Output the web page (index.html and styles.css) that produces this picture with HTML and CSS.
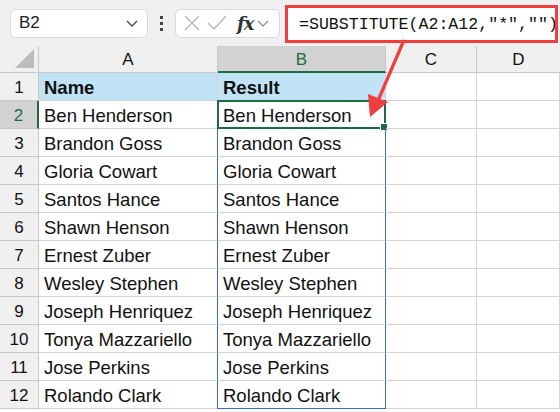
FILE: index.html
```html
<!DOCTYPE html>
<html>
<head>
<meta charset="utf-8">
<link rel="stylesheet" href="styles.css">
</head>
<body>
<div class="app">
  <div class="toolbar">
    <div class="namebox">
      <span class="ref">B2</span>
      <svg class="chev" width="14" height="10" viewBox="0 0 14 10"><path d="M2 3 L7 8 L12 3" fill="none" stroke="#444" stroke-width="1.3"/></svg>
    </div>
    <div class="dots"><i></i><i></i><i></i></div>
    <div class="fxbox">
      <svg width="20" height="20" viewBox="0 0 20 20"><path d="M3 3 L17 17 M17 3 L3 17" stroke="#b5b5b5" stroke-width="1.3"/></svg>
      <svg width="22" height="20" viewBox="0 0 22 20"><path d="M2 10 L8 16 L20 3" fill="none" stroke="#b5b5b5" stroke-width="1.3"/></svg>
      <span class="fx">fx</span>
      <svg width="12" height="10" viewBox="0 0 12 10"><path d="M1 3 L6 8 L11 3" fill="none" stroke="#888" stroke-width="1.1"/></svg>
    </div>
    <div class="formula">=SUBSTITUTE(A2:A12,"*","")</div>
  </div>

  <div class="sheet">
    <div class="corner"><span class="tri"></span></div>
    <div class="colh">A</div>
    <div class="colh sel">B</div>
    <div class="colh">C</div>
    <div class="colh last">D</div>

    <div class="rowh">1</div>
    <div class="cell head">Name</div>
    <div class="cell head">Result</div>
    <div class="cell"></div>
    <div class="cell"></div>

    <div class="rowh selr">2</div>
    <div class="cell">Ben Henderson</div>
    <div class="cell spill active">Ben Henderson<span class="handle"></span></div>
    <div class="cell"></div>
    <div class="cell"></div>

    <div class="rowh">3</div>
    <div class="cell">Brandon Goss</div>
    <div class="cell spill">Brandon Goss</div>
    <div class="cell"></div>
    <div class="cell"></div>

    <div class="rowh">4</div>
    <div class="cell">Gloria Cowart</div>
    <div class="cell spill">Gloria Cowart</div>
    <div class="cell"></div>
    <div class="cell"></div>

    <div class="rowh">5</div>
    <div class="cell">Santos Hance</div>
    <div class="cell spill">Santos Hance</div>
    <div class="cell"></div>
    <div class="cell"></div>

    <div class="rowh">6</div>
    <div class="cell">Shawn Henson</div>
    <div class="cell spill">Shawn Henson</div>
    <div class="cell"></div>
    <div class="cell"></div>

    <div class="rowh">7</div>
    <div class="cell">Ernest Zuber</div>
    <div class="cell spill">Ernest Zuber</div>
    <div class="cell"></div>
    <div class="cell"></div>

    <div class="rowh">8</div>
    <div class="cell">Wesley Stephen</div>
    <div class="cell spill">Wesley Stephen</div>
    <div class="cell"></div>
    <div class="cell"></div>

    <div class="rowh">9</div>
    <div class="cell">Joseph Henriquez</div>
    <div class="cell spill">Joseph Henriquez</div>
    <div class="cell"></div>
    <div class="cell"></div>

    <div class="rowh">10</div>
    <div class="cell">Tonya Mazzariello</div>
    <div class="cell spill">Tonya Mazzariello</div>
    <div class="cell"></div>
    <div class="cell"></div>

    <div class="rowh">11</div>
    <div class="cell">Jose Perkins</div>
    <div class="cell spill">Jose Perkins</div>
    <div class="cell"></div>
    <div class="cell"></div>

    <div class="rowh">12</div>
    <div class="cell">Rolando Clark</div>
    <div class="cell spill bottom">Rolando Clark</div>
    <div class="cell"></div>
    <div class="cell"></div>
  </div>

  <svg class="arrow" width="560" height="412" viewBox="0 0 560 412">
    <line x1="404" y1="40" x2="377" y2="103" stroke="#ef3e3e" stroke-width="3.2"/>
    <polygon points="370,117 388,102 368,94" fill="#ef3e3e"/>
  </svg>
</div>
</body>
</html>
```

FILE: styles.css
```css
* { box-sizing: border-box; }
html, body { margin: 0; padding: 0; }
body {
  width: 560px;
  height: 412px;
  overflow: hidden;
  background: #fff;
  font-family: "Liberation Sans", Arial, sans-serif;
}
.app { position: relative; width: 560px; height: 412px; }

.toolbar {
  height: 46px;
  background: #f0f0f0;
  display: flex;
  align-items: center;
  padding-left: 10px;
}
.namebox {
  width: 138px;
  height: 29px;
  background: #fff;
  border: 1px solid #d9d9d9;
  border-radius: 6px;
  display: flex;
  align-items: center;
  justify-content: space-between;
  padding: 0 8px 0 8px;
}
.ref { font-size: 17px; color: #222; }
.dots {
  width: 27px;
  display: flex;
  flex-direction: column;
  align-items: center;
  gap: 3px;
}
.dots i { display: block; width: 3px; height: 3px; background: #444; }
.fxbox {
  width: 105px;
  height: 29px;
  background: #fff;
  border: 1px solid #d9d9d9;
  border-radius: 6px;
  display: flex;
  align-items: center;
  padding: 0 3px 0 6px;
  gap: 4px;
}
.fx {
  font-family: "DejaVu Serif", "Liberation Serif", serif;
  font-style: italic;
  font-weight: bold;
  font-size: 18px;
  color: #333;
  margin-left: 5px;
  letter-spacing: -1px;
}
.formula {
  margin-left: 5px;
  flex: 1;
  height: 38px;
  margin-top: 2px;
  background: #fff;
  border: 3px solid #ef3e3e;
  font-family: "Liberation Mono", "Courier New", monospace;
  font-size: 16.6px;
  color: #111;
  display: flex;
  align-items: center;
  padding-left: 11px;
  white-space: nowrap;
  overflow: hidden;
  margin-right: 2px;
}

.sheet {
  display: grid;
  grid-template-columns: 39px 179px 168px 91px 83px;
  grid-template-rows: 27px repeat(12, 28px);
}
.corner {
  background: #f0f0f0;
  border-right: 1px solid #c8c8c8;
  border-bottom: 1px solid #c8c8c8;
  position: relative;
}
.tri {
  position: absolute;
  right: 4px;
  bottom: 4px;
  width: 0; height: 0;
  border-left: 19px solid transparent;
  border-bottom: 19px solid #bcbcbc;
}
.colh {
  background: #f0f0f0;
  border-right: 1px solid #c8c8c8;
  border-bottom: 1px solid #c8c8c8;
  display: flex;
  align-items: center;
  justify-content: center;
  font-size: 17px;
  color: #111;
  padding-top: 2px;
}
.colh.last { border-right: none; }
.colh.sel {
  background: #d2d2d2;
  color: #1e6c41;
  border-bottom: 2px solid #1e6c41;
}
.rowh {
  background: #f0f0f0;
  border-right: 1px solid #c8c8c8;
  border-bottom: 1px solid #c8c8c8;
  display: flex;
  align-items: center;
  justify-content: center;
  font-size: 17px;
  color: #111;
  padding-top: 2px;
}
.rowh.selr {
  background: #d2d2d2;
  color: #1e6c41;
  border-right: 2px solid #1e6c41;
}
.cell {
  border-right: 1px solid #d4d4d4;
  border-bottom: 1px solid #d4d4d4;
  display: flex;
  align-items: center;
  padding-left: 5px;
  padding-top: 2px;
  font-size: 18.5px;
  color: #111;
  white-space: nowrap;
  position: relative;
}
.cell.head { background: #c0e4f5; font-weight: bold; }
.cell.spill {
  border-left: 1px solid #3a6cc0;
  border-right: 1px solid #3a6cc0;
  margin-left: -1px;
  padding-left: 5px;
}
.cell.spill.bottom { border-bottom: 1px solid #3a6cc0; }
.cell.active {
  border: 2px solid #1e6c41;
  margin-top: -1px;
  padding-left: 4px;
}
.handle {
  position: absolute;
  right: -4px;
  bottom: -4px;
  width: 6px;
  height: 6px;
  background: #1e6c41;
  border: 1px solid #fff;
  box-sizing: content-box;
}
.arrow { position: absolute; left: 0; top: 0; pointer-events: none; }
```
